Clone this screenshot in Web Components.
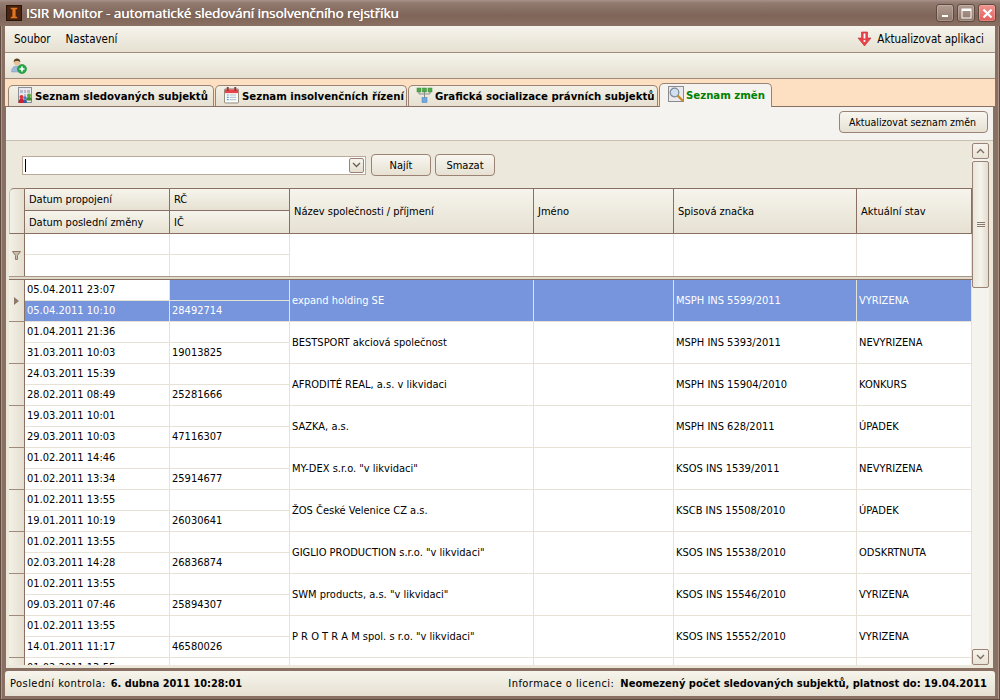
<!DOCTYPE html>
<html>
<head>
<meta charset="utf-8">
<title>ISIR Monitor</title>
<style>
  html, body { margin: 0; padding: 0; width: 1000px; height: 700px; overflow: hidden; }
  body { font: 11px "DejaVu Sans Condensed", "DejaVu Sans", sans-serif; color: #000; }
</style>
</head>
<body>
<isir-window>
  <title-bar slot="title">ISIR Monitor - automatické sledování insolvenčního rejstříku</title-bar>
  <menu-bar slot="menu"></menu-bar>
  <tool-bar slot="tools"></tool-bar>
  <tab-strip slot="tabs"></tab-strip>
  <change-panel slot="panel"></change-panel>
  <status-bar slot="status"></status-bar>
</isir-window>

<script>
const ICONS = {
  subjects: `<svg width="16" height="16" viewBox="0 0 16 16"><rect x="1.5" y=".5" width="13" height="15" fill="#e8e8ee" stroke="#8d8d95"/><path d="M3 3h3v3H3zM7 3h2v3H7zM10 3h3v3h-3zM7 7h2v3H7z" fill="#b9bcc8"/><circle cx="4.5" cy="10" r="2" fill="#d8343a"/><path d="M1.5 16c0-3 1-4.5 3-4.5s3 1.500 3 4.500z" fill="#c9202a"/><circle cx="12" cy="8.500" r="2" fill="#5aa83a"/><path d="M9 13.500c0-2.500 1-3.500 3-3.500s3 1 3 3.500z" fill="#3f8f2e"/><circle cx="8" cy="11" r="1.700" fill="#5577cc"/><path d="M6 16c0-2 .8-3.500 2-3.500s2 1.500 2 3.500z" fill="#3a5cb0"/></svg>`,
  calendar: `<svg width="15" height="18" viewBox="0 0 16 18"><rect x=".5" y="2.500" width="15" height="15" rx="1" fill="#fbfbf8" stroke="#8e8578"/><rect x="1" y="3" width="14" height="4" fill="#e8424a"/><path d="M4 .5v4M12 .5v4" stroke="#8a3a3a" stroke-width="2"/><path d="M3 9h2M3 11.500h2M3 14h2" stroke="#55a0d8" stroke-width="1.300"/><path d="M6 9h7M6 11.500h7M6 14h7" stroke="#a8b6c8"/></svg>`,
  tree: `<svg width="17" height="16" viewBox="0 0 17 16"><rect x="1" y="1" width="4" height="4" fill="#4fa84a" stroke="#3a8a36" stroke-width=".5"/><rect x="6.500" y="1" width="4" height="4" fill="#4fa84a" stroke="#3a8a36" stroke-width=".5"/><rect x="12" y="1" width="4" height="4" fill="#4fa84a" stroke="#3a8a36" stroke-width=".5"/><path d="M3 5v2h11V5M8.500 5v6" stroke="#8b8b8b" fill="none"/><rect x="6" y="10.500" width="5" height="5" fill="#6fa8e0" stroke="#4a80bc" stroke-width=".5"/></svg>`,
  lens: `<svg width="16" height="16" viewBox="0 0 16 16"><rect x=".5" y=".5" width="15" height="15" fill="#e9e9ee" stroke="#8a8a90"/><circle cx="6.500" cy="6.500" r="4.300" fill="#cfe0f2" stroke="#7d8a96" stroke-width="1.200"/><path d="M10 10l4.500 4.500" stroke="#c98a2e" stroke-width="2.400" stroke-linecap="round"/></svg>`,
  addUser: `<svg width="16" height="16" viewBox="0 0 16 16"><circle cx="6" cy="4" r="3.300" fill="#e8c39a"/><path d="M2.700 4C2.700 1.500 4.300.5 6 .5S9.300 1.500 9.300 4C8 2.500 4 2.500 2.700 4z" fill="#5c4326"/><path d="M.5 14c0-4 2-6 5.500-6s4 1.500 4 6z" fill="#9fb9d8" stroke="#7d97b8" stroke-width=".5"/><circle cx="11" cy="11" r="4.500" fill="#27a84a" stroke="#1c8438" stroke-width=".6"/><path d="M11 8.500v5M8.500 11h5" stroke="#fff" stroke-width="1.700"/></svg>`,
  alert: `<svg width="15" height="16" viewBox="0 0 15 16"><path d="M4.500 1h6v6H14l-6.500 8L1 7h3.500z" fill="#e8424a" stroke="#c42a32" stroke-width=".6"/><path d="M7.500 2.500v5" stroke="#fff" stroke-width="1.800"/><circle cx="7.500" cy="10" r="1.100" fill="#fff"/></svg>`,
};

class IsirWindow extends HTMLElement {
  constructor() {
    super();
    this.attachShadow({ mode: "open" }).innerHTML = `
      <style>
        :host {
          display: flex;
          flex-direction: column;
          width: 1000px;
          height: 700px;
          box-sizing: border-box;
          padding: 0 5px 4px;
          background: #8a7062;
          box-shadow: inset 1px 0 #5f4a3f, inset -1px 0 #5f4a3f, inset 0 -1px #5f4a3f, inset 2px 0 #ab9488, inset -2px 0 #ab9488;
        }
      </style>
      <slot name="title"></slot>
      <slot name="menu"></slot>
      <slot name="tools"></slot>
      <slot name="tabs"></slot>
      <slot name="panel"></slot>
      <slot name="status"></slot>`;
  }
}

class TitleBar extends HTMLElement {
  constructor() {
    super();
    this.attachShadow({ mode: "open" }).innerHTML = `
      <style>
        :host {
          display: flex;
          align-items: center;
          height: 26px;
          margin: 0 -5px;
          padding: 0 4px 0 6px;
          box-sizing: border-box;
          background: linear-gradient(#a7918a 0, #927a6f 3px, #7f6559 60%, #8a7062 100%);
          color: #fff;
          font: 13.400px "Open Sans", "DejaVu Sans", sans-serif;
        }
        .logo { width: 16px; height: 16px; margin-right: 4px; }
        .text { flex: 1; white-space: nowrap; text-shadow: .3px 0 #fff; }
        .btns { display: flex; gap: 3px; }
        .b {
          width: 18px; height: 18px; box-sizing: border-box; display: grid; place-items: center;
          border: 1px solid #5f4a3f; border-radius: 3px;
          background: linear-gradient(#b29c92, #8f776b);
          box-shadow: inset 0 0 0 1px rgba(255,255,255,.2);
        }
        .b.close { background: linear-gradient(#f09490, #e0605c); }
      </style>
      <svg class="logo" viewBox="0 0 15 15"><rect x=".5" y=".5" width="14" height="14" fill="#4a2410" stroke="#2a1408"/><path d="M4.500 2.500h6V4H9v7h1.500v1.500h-6V11H6V4H4.500z" fill="#e2761e"/></svg>
      <span class="text"><slot></slot></span>
      <div class="btns">
        <div class="b"><svg width="9" height="9"><rect x="1" y="6" width="6" height="2" fill="#fff"/></svg></div>
        <div class="b"><svg width="11" height="11"><rect x="1" y="1" width="9" height="9" fill="none" stroke="#fff"/><rect x="1" y="1" width="9" height="2" fill="#fff"/></svg></div>
        <div class="b close"><svg width="11" height="11"><path d="M1.500 1.500l8 8M9.500 1.500l-8 8" stroke="#fff" stroke-width="2.200"/></svg></div>
      </div>`;
  }
}

class MenuBar extends HTMLElement {
  constructor() {
    super();
    this.attachShadow({ mode: "open" }).innerHTML = `
      <style>
        :host {
          display: flex;
          align-items: center;
          height: 27px;
          box-sizing: border-box;
          padding: 0 11px 1px 9px;
          gap: 15px;
          background: linear-gradient(#f6f4ec, #e5e0d1);
          border-bottom: 1px solid #a08a7c;
          font: 11.500px "DejaVu Sans Condensed", "DejaVu Sans", sans-serif;
        }
        .spacer { flex: 1; }
        .update { display: flex; align-items: center; gap: 5px; }
      </style>
      <span>Soubor</span><span>Nastavení</span><span class="spacer"></span>
      <span class="update">${ICONS.alert}Aktualizovat aplikaci</span>`;
  }
}

class ToolBar extends HTMLElement {
  constructor() {
    super();
    this.attachShadow({ mode: "open" }).innerHTML = `
      <style>
        :host {
          display: flex;
          align-items: center;
          height: 26px;
          box-sizing: border-box;
          padding: 0 6px;
          background: linear-gradient(#f6f4ec, #e5e0d1);
          border-bottom: 1px solid #a08a7c;
        }
      </style>${ICONS.addUser}`;
  }
}

class TabItem extends HTMLElement {
  constructor() {
    super();
    this.attachShadow({ mode: "open" }).innerHTML = `
      <style>
        :host {
          display: flex;
          align-items: center;
          gap: 2px;
          height: 21px;
          box-sizing: border-box;
          padding-left: 7px;
          border: 1px solid #9a8375;
          border-bottom: 0;
          border-radius: 5px 5px 0 0;
          background: linear-gradient(#f3f0e7, #e5e0d1);
          font-weight: 700;
          font-size: 11.300px;
          white-space: nowrap;
          color: #000;
        }
        :host([active]) {
          height: 24px;
          background: #f5f3ef;
          color: #008000;
          margin-bottom: -1px;
          position: relative;
        }
        .ic { display: flex; width: 17px; justify-content: center; }
      </style>
      <span class="ic"><slot name="icon"></slot></span><slot></slot>`;
  }
}

class TabStrip extends HTMLElement {
  constructor() {
    super();
    this.attachShadow({ mode: "open" }).innerHTML = `
      <style>
        :host {
          display: flex;
          align-items: flex-end;
          height: 28px;
          box-sizing: border-box;
          padding-left: 3px;
          gap: 1px;
          background: #fde0c2;
          border-bottom: 1px solid #8a7062;
        }
      </style>
      <tab-item style="width:206px"><span slot="icon">${ICONS.subjects}</span>Seznam sledovaných subjektů</tab-item>
      <tab-item style="width:192px"><span slot="icon">${ICONS.calendar}</span>Seznam insolvenčních řízení</tab-item>
      <tab-item style="width:250px"><span slot="icon">${ICONS.tree}</span>Grafická socializace právních subjektů</tab-item>
      <tab-item active style="width:113px"><span slot="icon">${ICONS.lens}</span>Seznam změn</tab-item>`;
  }
}

class PushButton extends HTMLElement {
  constructor() {
    super();
    this.attachShadow({ mode: "open" }).innerHTML = `
      <style>
        :host {
          display: inline-flex;
          align-items: center;
          justify-content: center;
          height: 22px;
          box-sizing: border-box;
          border: 1px solid #9a8375;
          border-radius: 4px;
          background: linear-gradient(#f8f6f0, #e6e1d3);
          white-space: nowrap;
        }
      </style><slot></slot>`;
  }
}

class ScrollRail extends HTMLElement {
  constructor() {
    super();
    this.attachShadow({ mode: "open" }).innerHTML = `
      <style>
        :host {
          display: flex;
          flex-direction: column;
          width: 17px;
          height: 522px;
          box-sizing: border-box;
          background: #f5f3ee;
        }
        .btn {
          height: 16px; display: grid; place-items: center; box-sizing: border-box;
          border: 1px solid #9a8375; border-radius: 2px;
          background: linear-gradient(#f6f4ec, #e8e3d6);
        }
        .thumb {
          height: 127px; margin-top: 2px; box-sizing: border-box; display: grid; place-items: center;
          border: 1px solid #9a8375; border-radius: 2px;
          background: linear-gradient(90deg, #eae6da, #f5f3ec 50%, #e2dccd);
        }
        .rest { flex: 1; }
      </style>
      <div class="btn"><svg width="9" height="6"><path d="M1 5l3.500-3.500L8 5" fill="none" stroke="#7d6a5e" stroke-width="1.300"/></svg></div>
      <div class="thumb"><svg width="8" height="6"><path d="M0 .5h8M0 2.500h8M0 4.500h8" stroke="#8a7a6e"/></svg></div>
      <div class="rest"></div>
      <div class="btn"><svg width="9" height="6"><path d="M1 1l3.500 3.500L8 1" fill="none" stroke="#7d6a5e" stroke-width="1.300"/></svg></div>`;
  }
}

const ROWS = [
  ["05.04.2011 23:07", "05.04.2011 10:10", "28492714", "expand holding SE", "MSPH INS 5599/2011", "VYRIZENA"],
  ["01.04.2011 21:36", "31.03.2011 10:03", "19013825", "BESTSPORT akciová společnost", "MSPH INS 5393/2011", "NEVYRIZENA"],
  ["24.03.2011 15:39", "28.02.2011 08:49", "25281666", "AFRODITÉ REAL, a.s. v likvidaci", "MSPH INS 15904/2010", "KONKURS"],
  ["19.03.2011 10:01", "29.03.2011 10:03", "47116307", "SAZKA, a.s.", "MSPH INS 628/2011", "ÚPADEK"],
  ["01.02.2011 14:46", "01.02.2011 13:34", "25914677", "MY-DEX s.r.o. \"v likvidaci\"", "KSOS INS 1539/2011", "NEVYRIZENA"],
  ["01.02.2011 13:55", "19.01.2011 10:19", "26030641", "ŽOS České Velenice CZ a.s.", "KSCB INS 15508/2010", "ÚPADEK"],
  ["01.02.2011 13:55", "02.03.2011 14:28", "26836874", "GIGLIO PRODUCTION s.r.o. \"v likvidaci\"", "KSOS INS 15538/2010", "ODSKRTNUTA"],
  ["01.02.2011 13:55", "09.03.2011 07:46", "25894307", "SWM products, a.s. \"v likvidaci\"", "KSOS INS 15546/2010", "VYRIZENA"],
  ["01.02.2011 13:55", "14.01.2011 11:17", "46580026", "P R O T R A M spol. s r.o. \"v likvidaci\"", "KSOS INS 15552/2010", "VYRIZENA"],
  ["01.02.2011 13:55", "", "", "", "", ""],
];

class GridRow extends HTMLElement {
  set data(d) {
    const [d1, d2, ic, name, mark, state] = d.row;
    this.toggleAttribute("selected", !!d.selected);
    this.shadowRoot.innerHTML = `
      <style>
        :host {
          display: grid;
          grid-template-columns: var(--cols);
          grid-template-rows: 21px 21px;
          height: 42px;
          background: #fff;
          flex: none;
        }
        div { box-sizing: border-box; white-space: nowrap; display: flex; align-items: center; padding-left: 2px; border-right: 1px solid #e6e2d6; border-bottom: 1px solid #e6e2d6; }
        .head { grid-row: 1 / 3; padding: 0; justify-content: center; background: linear-gradient(90deg, #f3f0e7, #e4dfd0); border-right: 1px solid #8a7062; border-bottom: 1px solid #a08a7c; }
        .up { padding-bottom: 2px; }
        :host([selected]) .blue { background: #7795dd; color: #fff; }
      </style>
      <div class="head">${d.selected ? '<svg width="5" height="8"><path d="M0 0l5 4-5 4z" fill="#8d7a6d"/></svg>' : ""}</div>
      <div class="up">${d1}</div><div class="blue up"></div>
      <div class="blue" style="grid-column:4;grid-row:1/3">${name}</div>
      <div class="blue" style="grid-column:5;grid-row:1/3"></div>
      <div class="blue" style="grid-column:6;grid-row:1/3">${mark}</div>
      <div class="blue" style="grid-column:7;grid-row:1/3">${state}</div>
      <div class="up blue" style="grid-column:2;grid-row:2">${d2}</div><div class="up blue" style="grid-column:3;grid-row:2">${ic}</div>`;
  }
  constructor() {
    super();
    this.attachShadow({ mode: "open" });
  }
}

class DataGrid extends HTMLElement {
  constructor() {
    super();
    this.attachShadow({ mode: "open" }).innerHTML = `
      <style>
        :host {
          --cols: 16px 145px 120px 244px 140px 183px 115px;
          display: flex;
          flex-direction: column;
          width: 963px;
          height: 477px;
          overflow: hidden;
          box-sizing: border-box;
        }
        .top { display: grid; grid-template-columns: var(--cols); grid-template-rows: 23px 23px 21px 21px; flex: none; }
        .top > div { box-sizing: border-box; display: flex; align-items: center; white-space: nowrap; }
        .corner { grid-row: 1 / 3; border-radius: 5px 0 0 0; background: linear-gradient(90deg, #f3f0e7, #e4dfd0); border-top: 1px solid #9a8375; border-left: 1px solid #c9c0b2; border-right: 1px solid #8a7062; border-bottom: 1px solid #8a7062; }
        .h { padding-left: 4px; background: linear-gradient(#f6f4ec, #e6e1d2); border-top: 1px solid #8a7062; border-right: 1px solid #8a7062; border-bottom: 1px solid #8a7062; }
        .t { grid-row: 1 / 3; }
        .h2 { border-top: 0; }
        .fhead { grid-row: 3 / 5; justify-content: center; background: linear-gradient(90deg, #f3f0e7, #e4dfd0); border-right: 1px solid #8a7062; }
        .f { background: #fff; border-right: 1px solid #e6e2d6; }
        .b { border-bottom: 1px solid #e6e2d6; }
        .tf { grid-row: 3 / 5; }
        .sep { height: 4px; flex: none; background: #e0dacb; border-top: 1px solid #a8978a; border-bottom: 1px solid #8a7062; box-sizing: border-box; }
      </style>
      <div class="top">
        <div class="corner"></div>
        <div class="h">Datum propojení</div><div class="h">RČ</div>
        <div class="h t">Název společnosti / příjmení</div><div class="h t">Jméno</div><div class="h t">Spisová značka</div><div class="h t">Aktuální stav</div>
        <div class="h h2" style="grid-column:2;grid-row:2">Datum poslední změny</div><div class="h h2" style="grid-column:3;grid-row:2">IČ</div>
        <div class="fhead"><svg width="9" height="9"><path d="M.5 .5h8L5.500 4.500v4h-2v-4z" fill="#c8bda8" stroke="#8d7a6d"/></svg></div>
        <div class="f b" style="grid-column:2;grid-row:3"></div><div class="f b" style="grid-column:3;grid-row:3"></div>
        <div class="f tf" style="grid-column:4"></div><div class="f tf" style="grid-column:5"></div><div class="f tf" style="grid-column:6"></div><div class="f tf" style="grid-column:7"></div>
        <div class="f" style="grid-column:2;grid-row:4"></div><div class="f" style="grid-column:3;grid-row:4"></div>
      </div>
      <div class="sep"></div>`;
    ROWS.forEach((row, i) => {
      const el = document.createElement("grid-row");
      el.data = { row, selected: i === 0 };
      this.shadowRoot.appendChild(el);
    });
  }
}

class ChangePanel extends HTMLElement {
  constructor() {
    super();
    this.attachShadow({ mode: "open" }).innerHTML = `
      <style>
        :host {
          display: flex;
          flex-direction: column;
          height: 562px;
          margin-right: 2px;
          box-sizing: border-box;
          background: #ece8dc;
          border-left: 1px solid #8a7062;
          border-bottom: 1px solid #8a7062;
          flex: none;
        }
        .head {
          display: flex;
          justify-content: flex-end;
          height: 34px;
          box-sizing: border-box;
          padding: 4px 5px 0 0;
          background: #f5f3ef;
          border-bottom: 1px solid #c9c0b2;
          flex: none;
        }
        .body { display: flex; padding: 1px 0 0 3px; flex: 1; min-height: 0; }
        .main { display: flex; flex-direction: column; width: 963px; }
        .search { display: flex; align-items: center; gap: 4px; height: 46px; padding-left: 13px; box-sizing: border-box; flex: none; }
        .combo { display: flex; align-items: center; width: 344px; height: 19px; box-sizing: border-box; background: #fff; border: 1px solid #b9aa9c; justify-content: space-between; margin-right: 1px; }
        .caret { width: 1px; height: 13px; background: #000; margin-left: 2px; }
        .drop { width: 15px; height: 15px; margin-right: 1px; box-sizing: border-box; display: grid; place-items: center; border: 1px solid #9a8375; border-radius: 2px; background: linear-gradient(#f6f4ec, #e4dfd0); }
        .rail { margin-top: 1px; }
      </style>
      <div class="head"><push-button style="width:149px;font-size:10.500px;padding-right:2px">Aktualizovat seznam změn</push-button></div>
      <div class="body">
        <div class="main">
          <div class="search">
            <div class="combo"><span class="caret"></span><span class="drop"><svg width="9" height="6"><path d="M1 1l3.500 3.500L8 1" fill="none" stroke="#6d5c50" stroke-width="1.300"/></svg></span></div>
            <push-button style="width:60px">Najít</push-button>
            <push-button style="width:60px">Smazat</push-button>
          </div>
          <data-grid></data-grid>
        </div>
        <scroll-rail class="rail"></scroll-rail>
      </div>`;
  }
}

class StatusBar extends HTMLElement {
  constructor() {
    super();
    this.attachShadow({ mode: "open" }).innerHTML = `
      <style>
        :host {
          display: flex;
          align-items: center;
          flex: 1;
          padding: 0 8px 0 5px;
          gap: 5px;
          margin-top: 2px;
          border-radius: 3px 3px 0 0;
          background: linear-gradient(#f6f4ec, #e5e0d1);
          white-space: nowrap;
        }
        b { font-weight: 700; font-size: 10.900px; }
        .wide { font-size: 11.050px; }
        .l { letter-spacing: .45px; }
        .spacer { flex: 1; }
      </style>
      <span class="l">Poslední kontrola:</span><b>6. dubna 2011 10:28:01</b><span class="spacer"></span>
      <span class="l" style="margin-right:1px">Informace o licenci:</span><b class="wide">Neomezený počet sledovaných subjektů, platnost do: 19.04.2011</b>`;
  }
}

customElements.define("isir-window", IsirWindow);
customElements.define("title-bar", TitleBar);
customElements.define("menu-bar", MenuBar);
customElements.define("tool-bar", ToolBar);
customElements.define("tab-item", TabItem);
customElements.define("tab-strip", TabStrip);
customElements.define("push-button", PushButton);
customElements.define("scroll-rail", ScrollRail);
customElements.define("grid-row", GridRow);
customElements.define("data-grid", DataGrid);
customElements.define("change-panel", ChangePanel);
customElements.define("status-bar", StatusBar);
</script>
</body>
</html>
